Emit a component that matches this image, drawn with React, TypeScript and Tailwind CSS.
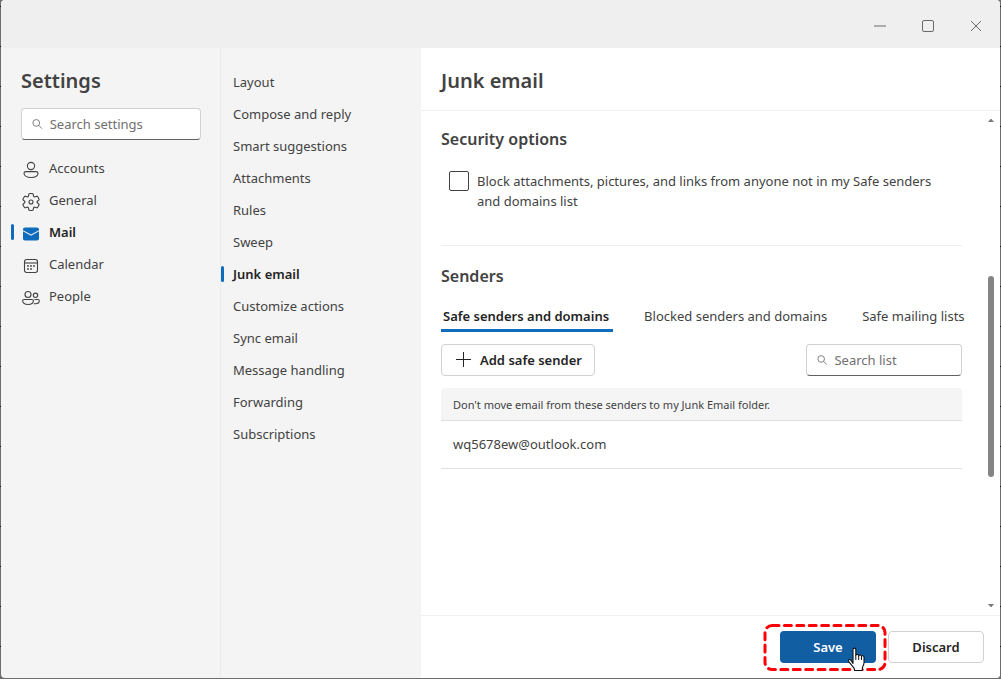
import { useState, type ReactNode } from "react";

type NavItem = { label: string; icon: ReactNode };

const strokeProps = {
  width: 18,
  height: 18,
  viewBox: "0 0 18 18",
  fill: "none",
  stroke: "currentColor",
  strokeWidth: 1.1,
  "aria-hidden": true,
} as const;

function PersonIcon() {
  return (
    <svg {...strokeProps}>
      <circle cx="9" cy="5" r="3.6" />
      <path d="M4 10.6h10c1.1 0 2 .8 2 1.7 0 2.600-3 4.200-7 4.200s-7-1.600-7-4.200c0-.9.9-1.700 2-1.700z" />
    </svg>
  );
}

function GearIcon() {
  return (
    <svg {...strokeProps} viewBox="1 1 18 18">
      <path d="M1.910 7.380A8.500 8.500 0 0 1 3.700 4.300a.5.5 0 0 1 .54-.13l1.920.68a1 1 0 0 0 1.320-.76l.36-2a.5.5 0 0 1 .4-.4 8.530 8.530 0 0 1 3.550 0c.2.04.35.2.38.4l.37 2a1 1 0 0 0 1.320.76l1.920-.68a.5.5 0 0 1 .54.13 8.500 8.500 0 0 1 1.780 3.080c.06.2 0 .4-.15.54l-1.560 1.320a1 1 0 0 0 0 1.520l1.560 1.320a.5.5 0 0 1 .15.54 8.500 8.500 0 0 1-1.780 3.080.5.5 0 0 1-.54.13l-1.920-.68a1 1 0 0 0-1.320.76l-.37 2a.5.5 0 0 1-.38.4 8.530 8.530 0 0 1-3.560 0 .5.5 0 0 1-.39-.4l-.36-2a1 1 0 0 0-1.320-.76l-1.920.68a.5.5 0 0 1-.54-.13 8.500 8.500 0 0 1-1.780-3.080.5.5 0 0 1 .15-.54l1.560-1.320a1 1 0 0 0 0-1.520L2.060 7.920a.5.5 0 0 1-.15-.54z" />
      <circle cx="10" cy="10" r="2" />
    </svg>
  );
}

function MailIcon() {
  return (
    <svg width="18" height="18" viewBox="0 0 18 18" aria-hidden>
      <path fill="#0f6cbd" d="M1 4.500C1 3.400 1.900 2.500 3 2.500h12c1.100 0 2 .9 2 2v.7L9 9.500 1 5.200z" />
      <path fill="#0f6cbd" d="M1 6.300l8 4.400 8-4.400v7.200c0 1.100-.9 2-2 2H3c-1.100 0-2-.9-2-2z" />
    </svg>
  );
}

function CalendarIcon() {
  return (
    <svg {...strokeProps}>
      <rect x="2.500" y="2.500" width="13" height="13" rx="2.200" />
      <path d="M2.500 6h13" />
      <g fill="currentColor" stroke="none">
        <circle cx="9" cy="9" r="0.900" />
        <circle cx="12" cy="9" r="0.900" />
        <circle cx="6" cy="9" r="0.900" />
        <circle cx="6" cy="12" r="0.900" />
        <circle cx="9" cy="12" r="0.900" />
      </g>
    </svg>
  );
}

function PeopleIcon() {
  return (
    <svg {...strokeProps}>
      <circle cx="6" cy="5.500" r="3" />
      <circle cx="13.500" cy="6.300" r="2.200" />
      <path d="M2 10.500h8c.8 0 1.400.6 1.400 1.300 0 2.400-2.300 3.700-5.400 3.700S.6 14.200.6 11.800C.6 11.100 1.200 10.500 2 10.500z" />
      <path d="M12.500 10.500h3.400c.8 0 1.400.6 1.400 1.300 0 1.900-1.500 3-3.800 3-.6 0-1.100-.1-1.600-.2" />
    </svg>
  );
}

function SearchIcon() {
  return (
    <svg width="12" height="12" viewBox="0 0 12 12" fill="none" stroke="#707070" aria-hidden>
      <circle cx="4.800" cy="4.800" r="3.800" />
      <path d="M7.600 7.600l3.700 3.700" />
    </svg>
  );
}

function HandCursor() {
  return (
    <svg
      className="pointer-events-none absolute top-4 left-[67px]"
      width="19"
      height="25"
      viewBox="0 0 19 25"
      aria-hidden
    >
      <path
        d="M6 16.500V2.500C6 .6 8.800.6 8.800 2.500V8.500c.2-1.400 2.900-1.300 2.900.3.300-1.300 2.800-1.100 2.800.6.400-1 2.500-.8 2.500.9V16c0 2-1.700 3.500-1.700 5.500v2H7.500v-1.500C6 19.500 3 16.500 1.500 14.200c-.6-1.200 1.100-2.200 2.200-1.200z"
        fill="#fff"
        stroke="#111"
        strokeWidth="1.100"
        strokeLinejoin="round"
      />
      <path d="M8.800 8.500v4.500M11.700 9v4M14.500 9.500v3.500" stroke="#111" />
    </svg>
  );
}

const sections: NavItem[] = [
  { label: "Accounts", icon: <PersonIcon /> },
  { label: "General", icon: <GearIcon /> },
  { label: "Mail", icon: <MailIcon /> },
  { label: "Calendar", icon: <CalendarIcon /> },
  { label: "People", icon: <PeopleIcon /> },
];

const mailPages = [
  "Layout",
  "Compose and reply",
  "Smart suggestions",
  "Attachments",
  "Rules",
  "Sweep",
  "Junk email",
  "Customize actions",
  "Sync email",
  "Message handling",
  "Forwarding",
  "Subscriptions",
];

const tabs = ["Safe senders and domains", "Blocked senders and domains", "Safe mailing lists"];

const safeSenders = ["wq5678ew@outlook.com"];

function TitleBar() {
  return (
    <div className="flex h-12 shrink-0 items-center justify-end bg-[#efefef] text-[#6b6b6b]">
      <button aria-label="Minimize" className="flex h-12 w-12 items-center justify-center pt-1">
        <svg width="12" height="12" viewBox="0 0 12 12" stroke="currentColor">
          <path d="M0 6h12" />
        </svg>
      </button>
      <button aria-label="Maximize" className="flex h-12 w-12 items-center justify-center pt-1">
        <svg width="12" height="12" viewBox="0 0 12 12" fill="none" stroke="currentColor">
          <rect x="0.500" y="0.500" width="11" height="11" rx="1.500" />
        </svg>
      </button>
      <button aria-label="Close" className="flex h-12 w-12 items-center justify-center pt-1">
        <svg width="12" height="12" viewBox="0 0 12 12" stroke="currentColor">
          <path d="M1 1l10 10M11 1L1 11" />
        </svg>
      </button>
    </div>
  );
}

function SearchBox({ placeholder }: { placeholder: string }) {
  return (
    <label className="flex h-8 items-center gap-[7px] rounded border border-[#d1d1d1] border-b-[#616161] bg-white px-[10px]">
      <SearchIcon />
      <input
        type="text"
        aria-label={placeholder}
        placeholder={placeholder}
        className="w-full min-w-0 bg-transparent pt-0.5 outline-none placeholder:text-[#707070]"
      />
    </label>
  );
}

function Sidebar() {
  return (
    <aside className="w-[219px] shrink-0 pt-4 pr-[19px] pl-5">
      <h1 className="mb-[11px] pt-px text-[20px] leading-8 font-semibold">Settings</h1>
      <SearchBox placeholder="Search settings" />
      <nav className="mt-3 -ml-[10px]">
        {sections.map(({ label, icon }) => {
          const active = label === "Mail";
          return (
            <a key={label} href="#" className="flex h-8 items-center" aria-current={active ? "page" : undefined}>
              <span className={active ? "h-4 w-[3px] rounded-full bg-[#0f6cbd]" : "h-4 w-[3px]"} />
              <span className="ml-2 pt-[3px]">{icon}</span>
              <span className={active ? "ml-[9px] pt-0.5 font-semibold text-[#242424]" : "ml-[9px] pt-0.5"}>
                {label}
              </span>
            </a>
          );
        })}
      </nav>
    </aside>
  );
}

function MailNav() {
  return (
    <nav className="w-[201px] shrink-0 border-l border-[#ebebeb] pt-[18px]">
      {mailPages.map((label) => {
        const active = label === "Junk email";
        return (
          <a key={label} href="#" className="flex h-8 items-center gap-[9px]" aria-current={active ? "page" : undefined}>
            <span className={active ? "h-4 w-[3px] rounded-full bg-[#0f6cbd]" : "h-4 w-[3px]"} />
            <span className={active ? "pt-0.5 font-semibold text-[#242424]" : "pt-0.5"}>{label}</span>
          </a>
        );
      })}
    </nav>
  );
}

function ScrollBar() {
  return (
    <div className="flex w-[18px] shrink-0 flex-col items-center py-[7px]" aria-hidden>
      <svg width="6" height="4" viewBox="0 0 6 4" fill="#7a7a7a">
        <path d="M0 4L2.500 1h1L6 4z" />
      </svg>
      <div className="grow-[153]" />
      <div className="w-[6px] grow-[201] rounded-full bg-[#858585]" />
      <div className="grow-[126]" />
      <svg width="6" height="4" viewBox="0 0 6 4" fill="#7a7a7a">
        <path d="M0 0L2.500 3h1L6 0z" />
      </svg>
    </div>
  );
}

function Senders() {
  const [tab, setTab] = useState(tabs[0]);

  return (
    <section className="pt-[18px]">
      <h3 className="text-[16px] leading-6 font-semibold">Senders</h3>
      <div role="tablist" className="mt-4 flex gap-[29px] whitespace-nowrap">
        {tabs.map((name) => (
          <button
            key={name}
            role="tab"
            aria-selected={tab === name}
            onClick={() => setTab(name)}
            className={
              tab === name
                ? "border-b-3 border-[#0f6cbd] pr-1 pb-px pl-0.5 leading-6 font-semibold text-[#242424]"
                : "border-b-3 border-transparent pr-1 pb-px pl-0.5 leading-6"
            }
          >
            {name}
          </button>
        ))}
      </div>
      <div className="mt-3 flex justify-between">
        <button className="flex h-8 items-center gap-2 rounded border border-[#d1d1d1] px-3 font-semibold text-[#242424]">
          <svg width="18" height="18" viewBox="0 0 18 18" stroke="currentColor" aria-hidden>
            <path d="M9.500 1v15M2 8.500h15" />
          </svg>
          <span className="pt-px">Add safe sender</span>
        </button>
        <div className="w-[156px]">
          <SearchBox placeholder="Search list" />
        </div>
      </div>
      <table className="mt-3 w-full text-left">
        <thead>
          <tr className="h-8 border-b border-[#e0e0e0] bg-[#f5f5f5] text-[11px]">
            <th className="rounded-t px-3 pt-0.5 font-normal">
              Don't move email from these senders to my Junk Email folder.
            </th>
          </tr>
        </thead>
        <tbody>
          {safeSenders.map((email) => (
            <tr key={email} className="h-12 border-b border-[#e0e0e0]">
              <td className="px-3 pt-0.5">{email}</td>
            </tr>
          ))}
        </tbody>
      </table>
    </section>
  );
}

function Footer() {
  return (
    <footer className="flex shrink-0 justify-end gap-3 border-t border-[#efefef] py-[15px] pr-4 font-semibold">
      <div className="relative">
        <button className="h-8 w-24 rounded bg-[#115ea3] pt-0.5 text-white">Save</button>
        {/* Callout round the Save button */}
        <svg
          className="pointer-events-none absolute -top-2 -left-[17px] max-w-none"
          width="124"
          height="48"
          viewBox="0 0 124 48"
          fill="none"
          aria-hidden
        >
          <rect
            x="2"
            y="2.500"
            width="120"
            height="44"
            rx="7"
            stroke="#fb0007"
            strokeWidth="3"
            strokeDasharray="7 5.400"
            strokeLinecap="round"
          />
        </svg>
        <HandCursor />
      </div>
      <button className="h-8 w-24 rounded border border-[#d1d1d1] bg-white pt-0.5 text-[#242424]">Discard</button>
    </footer>
  );
}

function JunkEmail() {
  return (
    <main className="flex min-w-0 flex-1 flex-col bg-white">
      <header className="border-b border-[#efefef] px-5 pt-[17px] pb-[13px]">
        <h2 className="text-[20px] leading-8 font-semibold">Junk email</h2>
      </header>
      <div className="flex flex-1">
        <div className="min-w-0 flex-1 px-5 pt-4">
          <section className="border-b border-[#efefef] pb-[34px]">
            <h3 className="text-[16px] leading-6 font-semibold">Security options</h3>
            <label className="mt-5 flex items-start gap-2 px-2">
              <input
                type="checkbox"
                className="size-5 shrink-0 appearance-none rounded-xs border border-[#424242] bg-white checked:bg-[#0f6cbd]"
              />
              <span className="leading-5">
                Block attachments, pictures, and links from anyone not in my Safe senders and domains list
              </span>
            </label>
          </section>
          <Senders />
        </div>
        <ScrollBar />
      </div>
      <Footer />
    </main>
  );
}

export default function App() {
  return (
    <div className="flex min-h-screen flex-col bg-[repeating-linear-gradient(#6d6d70_0_6px,#151515_6px_7px,#6d6d70_7px_40px)] px-px pb-px font-['Noto_Sans',sans-serif] text-[13px] text-[#424242]">
      <div className="flex flex-1 flex-col overflow-hidden rounded bg-[#f4f4f4]">
        <TitleBar />
        <div className="flex flex-1">
          <Sidebar />
          <MailNav />
          <JunkEmail />
        </div>
      </div>
    </div>
  );
}
